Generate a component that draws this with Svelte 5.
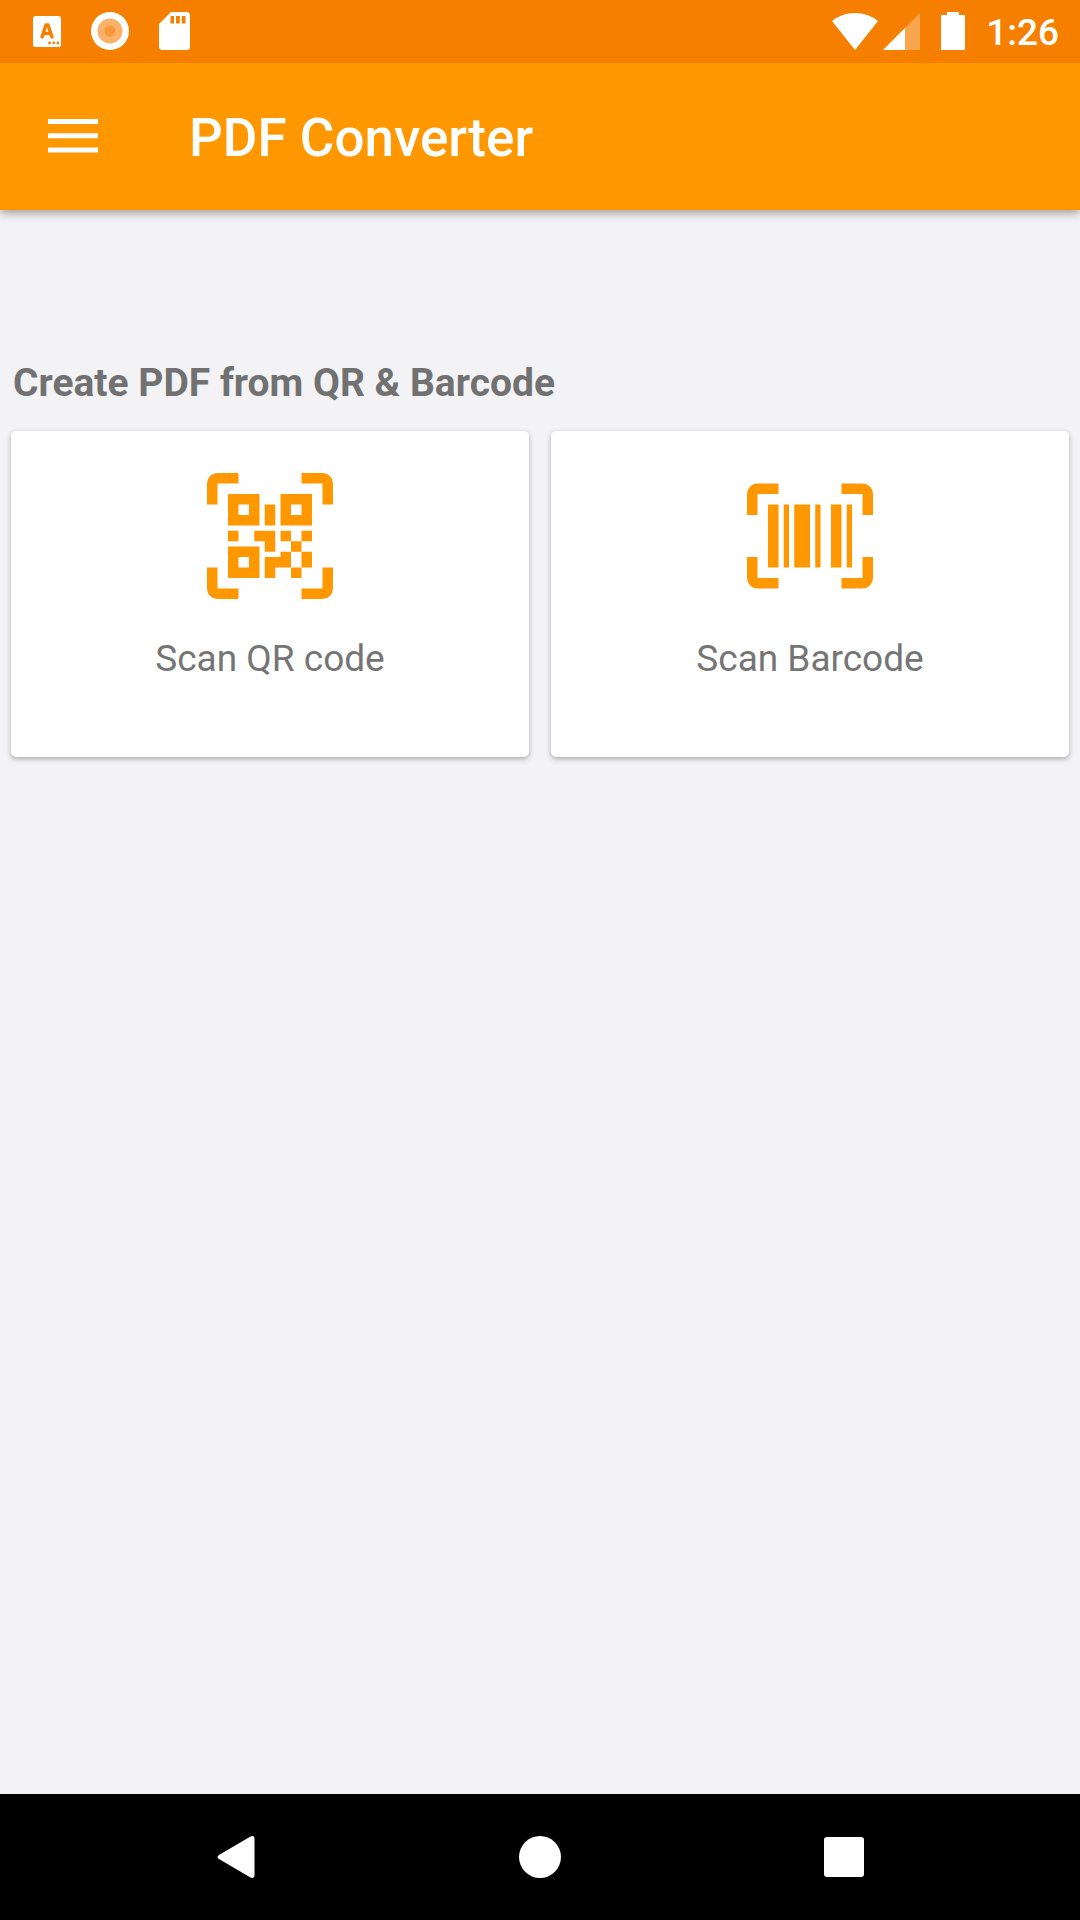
<script>
  const cards = [
    { id: 'qr', label: 'Scan QR code' },
    { id: 'barcode', label: 'Scan Barcode' }
  ];
</script>

<div class="screen">
  <div class="status">
    <div class="status-group notices">
      <svg width="28" height="31" viewBox="0 0 28 31" aria-hidden="true">
        <rect width="28" height="31" rx="2.5" fill="#fff" />
        <path d="M9 21 13 9h2l4 12M10.500 17.500h7" fill="none" stroke="#f77f00" stroke-width="3.400" stroke-linecap="round" stroke-linejoin="round" />
        <g fill="#f77f00"><circle cx="16.500" cy="27" r="1.400" /><circle cx="20.700" cy="27" r="1.400" /><circle cx="24.900" cy="27" r="1.400" /></g>
      </svg>
      <svg width="38" height="38" viewBox="0 0 38 38" aria-hidden="true">
        <circle cx="19" cy="19" r="19" fill="#fff" />
        <circle cx="19" cy="19" r="12.500" fill="#fab26b" />
        <circle cx="19" cy="19" r="5.700" fill="#f89a3c" />
      </svg>
      <svg width="31" height="38" viewBox="0 0 31 38" aria-hidden="true">
        <path d="M12 0h15.500a3.500 3.500 0 0 1 3.500 3.500v31a3.500 3.500 0 0 1-3.500 3.500h-24A3.500 3.500 0 0 1 0 34.500V12Z" fill="#fff" />
        <path d="M11.500 4h3.500v7.500h-3.500zM17 4h3.800v7.500H17zM22.800 4h3.700v7.500h-3.700z" fill="#f77f00" />
      </svg>
    </div>
    <div class="status-group system">
      <svg width="88" height="38" viewBox="0 0 88 38" aria-hidden="true">
        <path d="M0 9Q10 1 23 1t23 8L23 38Z" fill="#fff" />
        <path d="M88 1v37H51Z" fill="#fff" opacity=".3" />
        <path d="M73 16v22H51Z" fill="#fff" />
      </svg>
      <svg width="24" height="38" viewBox="0 0 24 38" aria-hidden="true">
        <path d="M6 0h12v3h6v35H0V3h6z" fill="#fff" />
      </svg>
      <time>1:26</time>
    </div>
  </div>

  <header>
    <button class="menu" aria-label="Open menu">
      <svg width="50" height="34" viewBox="0 0 50 34" aria-hidden="true">
        <path d="M0 0h50v5H0zM0 14.300h50v5H0zM0 28.500h50v5H0z" fill="#fff" />
      </svg>
    </button>
    <h1>PDF Converter</h1>
  </header>

  <main>
    <h2>Create PDF from QR &amp; Barcode</h2>
    <div class="cards">
      {#each cards as card (card.id)}
        <button class="card">
          <svg width="126" height="126" viewBox="0 0 24 24" fill="#ff9800" aria-hidden="true">
            {#if card.id === 'qr'}
              <path d="M2 0h4v2H2v4H0V2a2 2 0 0 1 2-2zM18 0h4a2 2 0 0 1 2 2v4h-2V2h-4zM0 18h2v4h4v2H2a2 2 0 0 1-2-2zM22 18h2v4a2 2 0 0 1-2 2h-4v-2h4z" />
              <path fill-rule="evenodd" d="M4 4h6v6H4zM6 6v2h2V6zM14 4h6v6h-6zM16 6v2h2V6zM4 14h6v6H4zM6 16v2h2v-2z" />
              <path d="M11 6h2v4h-2zM4 11h2v2H4zM9 11h4v4h-2v-2H9zM14 11h2v2h-2zM18 11h2v2h-2zM16 13h2v2h-2zM18 15h2v3h-2zM14 15h2v3h-3v2h-2v-4h3zM16 18h2v2h-2z" />
            {:else}
              <path d="M2 2h4v2H2v4H0V4a2 2 0 0 1 2-2zM18 2h4a2 2 0 0 1 2 2v4h-2V4h-4zM0 16h2v4h4v2H2a2 2 0 0 1-2-2zM22 16h2v4a2 2 0 0 1-2 2h-4v-2h4z" />
              <path d="M4 6h2v12H4zM7 6h1v12H7zM9 6h3v12H9zM13 6h1v12h-1zM16 6h2v12h-2zM19 6h1v12h-1z" />
            {/if}
          </svg>
          <span>{card.label}</span>
        </button>
      {/each}
    </div>
  </main>

  <nav aria-label="System navigation">
    <button aria-label="Back">
      <svg width="38" height="42" viewBox="0 0 38 42" aria-hidden="true">
        <path d="M33.500.5Q37.500-1 37.500 3v36q0 4-4 2.500L2 23q-3-2 0-4Z" fill="#fff" />
      </svg>
    </button>
    <button aria-label="Home">
      <svg width="42" height="42" viewBox="0 0 42 42" aria-hidden="true"><circle cx="21" cy="21" r="21" fill="#fff" /></svg>
    </button>
    <button aria-label="Recent apps">
      <svg width="40" height="40" viewBox="0 0 40 40" aria-hidden="true"><rect width="40" height="40" rx="3" fill="#fff" /></svg>
    </button>
  </nav>
</div>

<style>
  :global(body) {
    margin: 0;
  }

  .screen {
    display: flex;
    flex-direction: column;
    min-height: 100vh;
    background: #f3f3f6;
    font-family: Roboto, sans-serif;
  }

  button {
    display: flex;
    align-items: center;
    justify-content: center;
    margin: 0;
    padding: 0;
    border: 0;
    background: none;
    font: inherit;
    cursor: pointer;
  }

  svg {
    display: block;
    flex: none;
  }

  .status {
    position: relative;
    z-index: 1;
    display: flex;
    justify-content: space-between;
    height: 63px;
    padding: 0 21px 0 33px;
    background: #f77f00;
    color: #fff;
  }

  .status-group {
    display: flex;
    align-items: center;
    height: 62px;
  }

  .notices {
    gap: 30px;
  }

  .system {
    gap: 21px;
  }

  time {
    padding-top: 4px;
    font-size: 37px;
    font-weight: 500;
    line-height: 44px;
  }

  header {
    display: flex;
    gap: 43px;
    height: 147px;
    background: #ff9800;
    box-shadow: 0 3px 9px rgba(0, 0, 0, 0.36);
    color: #fff;
  }

  .menu {
    width: 146px;
    height: 146px;
  }

  h1 {
    margin: 0;
    font-size: 53px;
    font-weight: 500;
    line-height: 150px;
  }

  main {
    flex: 1;
    padding: 150px 11px 22px;
  }

  h2 {
    margin: 0 2px 25px;
    color: #717171;
    font-size: 39px;
    font-weight: 700;
    line-height: 46px;
  }

  .cards {
    display: grid;
    grid-template-columns: 1fr 1fr;
    gap: 22px;
  }

  .card {
    flex-direction: column;
    gap: 37px;
    padding: 42px 10px 75px;
    border-radius: 5px;
    background: #fff;
    box-shadow: 0 2px 5px rgba(0, 0, 0, 0.3);
    color: #757575;
    font-size: 37px;
    line-height: 46px;
  }

  nav {
    display: grid;
    grid-template-columns: repeat(3, 1fr);
    height: 126px;
    padding: 0 84px;
    background: #000;
  }
</style>
